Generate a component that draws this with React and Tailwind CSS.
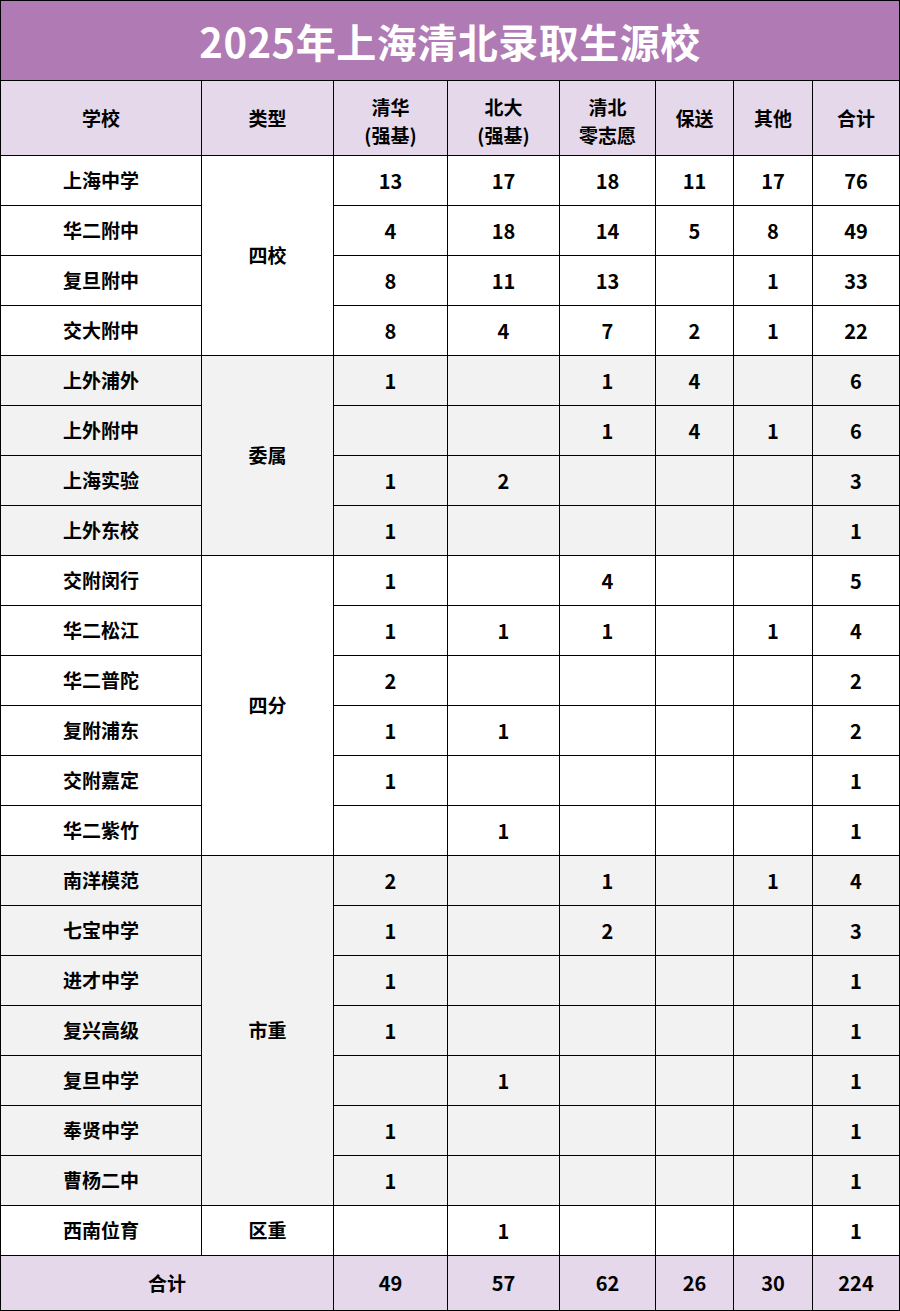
import React from "react";

const groups = [
  {
    type: "四校",
    bg: "bg-white",
    rows: [
      ["上海中学", "13", "17", "18", "11", "17", "76"],
      ["华二附中", "4", "18", "14", "5", "8", "49"],
      ["复旦附中", "8", "11", "13", "", "1", "33"],
      ["交大附中", "8", "4", "7", "2", "1", "22"],
    ],
  },
  {
    type: "委属",
    bg: "bg-[#f2f2f2]",
    rows: [
      ["上外浦外", "1", "", "1", "4", "", "6"],
      ["上外附中", "", "", "1", "4", "1", "6"],
      ["上海实验", "1", "2", "", "", "", "3"],
      ["上外东校", "1", "", "", "", "", "1"],
    ],
  },
  {
    type: "四分",
    bg: "bg-white",
    rows: [
      ["交附闵行", "1", "", "4", "", "", "5"],
      ["华二松江", "1", "1", "1", "", "1", "4"],
      ["华二普陀", "2", "", "", "", "", "2"],
      ["复附浦东", "1", "1", "", "", "", "2"],
      ["交附嘉定", "1", "", "", "", "", "1"],
      ["华二紫竹", "", "1", "", "", "", "1"],
    ],
  },
  {
    type: "市重",
    bg: "bg-[#f2f2f2]",
    rows: [
      ["南洋模范", "2", "", "1", "", "1", "4"],
      ["七宝中学", "1", "", "2", "", "", "3"],
      ["进才中学", "1", "", "", "", "", "1"],
      ["复兴高级", "1", "", "", "", "", "1"],
      ["复旦中学", "", "1", "", "", "", "1"],
      ["奉贤中学", "1", "", "", "", "", "1"],
      ["曹杨二中", "1", "", "", "", "", "1"],
    ],
  },
  {
    type: "区重",
    bg: "bg-white",
    rows: [["西南位育", "", "1", "", "", "", "1"]],
  },
];

const spanClass = {
  1: "row-span-1",
  4: "row-span-4",
  6: "row-span-6",
  7: "row-span-7",
};

const cell =
  "border-r border-b border-black flex items-center justify-center text-center";

export default function App() {
  const headers = [
    ["学校"],
    ["类型"],
    ["清华", "(强基)"],
    ["北大", "(强基)"],
    ["清北", "零志愿"],
    ["保送"],
    ["其他"],
    ["合计"],
  ];
  return (
    <div
      className="w-[900px] h-[1311px] bg-white text-black font-bold"
      style={{ fontFamily: '"Noto Sans CJK SC", "Noto Sans", sans-serif' }}
    >
      <div className="grid grid-cols-[201px_132px_114px_112px_96px_78px_79px_87px] grid-rows-[80px_75px_repeat(22,50px)_55px] border-l border-t border-black w-[900px]">
        <div
          className={`${cell} col-span-8 bg-[#b07ab5] text-white text-[40px] leading-none tracking-[0.5px]`}
        >
          2025年上海清北录取生源校
        </div>
        {headers.map((h, i) => (
          <div
            key={i}
            className={`${cell} flex-col bg-[#e4d8ea] text-[19px] leading-[28px] ${
              h.length > 1 ? "pt-[5px]" : ""
            }`}
          >
            {h.map((t, j) => (
              <span key={j}>{t}</span>
            ))}
          </div>
        ))}
        {groups.map((g, gi) =>
          g.rows.map((r, ri) => (
            <React.Fragment key={`${gi}-${ri}`}>
              <div className={`${cell} ${g.bg} text-[19px]`}>{r[0]}</div>
              {ri === 0 && (
                <div
                  className={`${cell} ${g.bg} ${spanClass[g.rows.length]} text-[19px]`}
                >
                  {g.type}
                </div>
              )}
              {r.slice(1).map((v, vi) => (
                <div key={vi} className={`${cell} ${g.bg} text-[20px]`}>
                  {v}
                </div>
              ))}
            </React.Fragment>
          ))
        )}
        <div className={`${cell} col-span-2 bg-[#e4d8ea] text-[19px]`}>合计</div>
        {["49", "57", "62", "26", "30", "224"].map((v, i) => (
          <div key={i} className={`${cell} bg-[#e4d8ea] text-[20px]`}>
            {v}
          </div>
        ))}
      </div>
    </div>
  );
}
